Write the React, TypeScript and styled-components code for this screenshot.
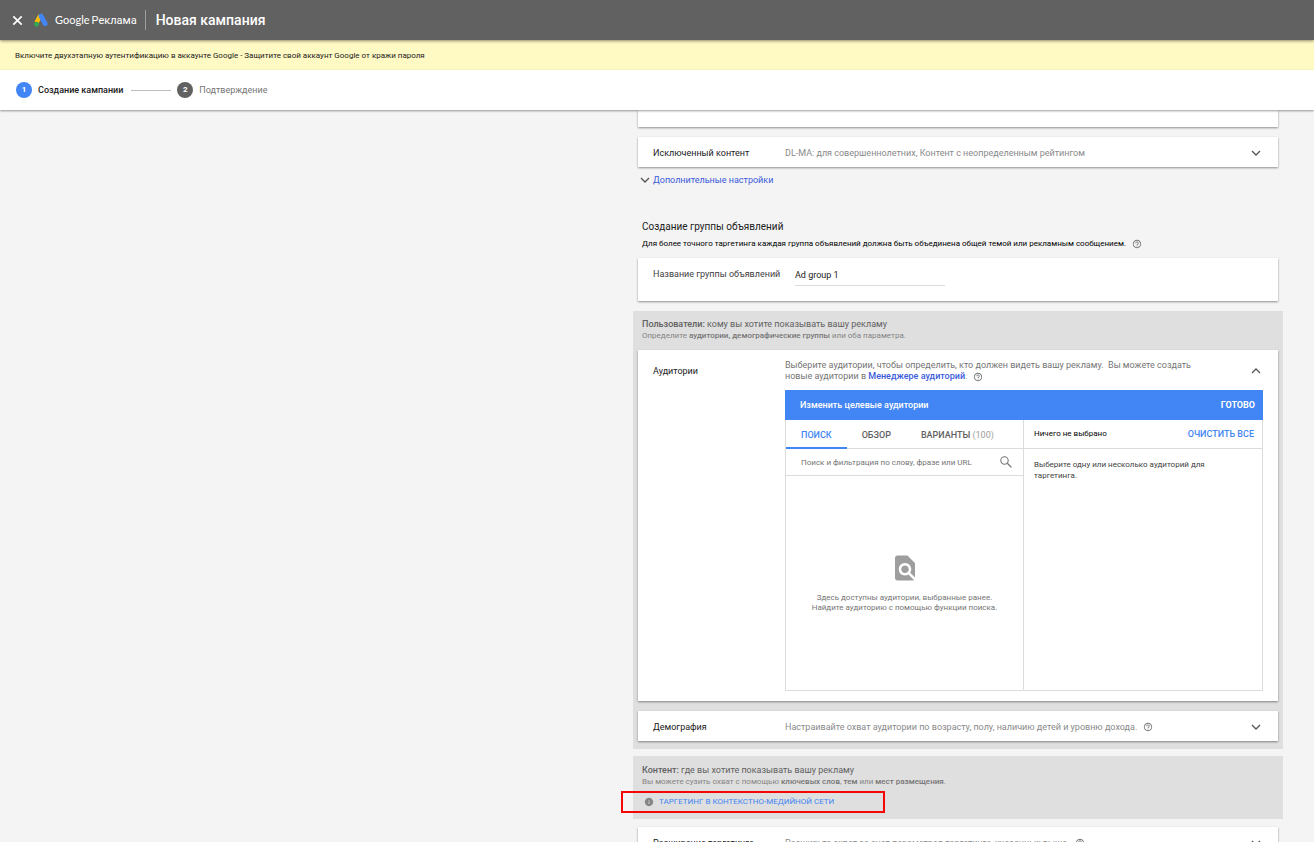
import React from "react";
import styled, { createGlobalStyle, css } from "styled-components";

const GlobalStyle = createGlobalStyle`
  *, *::before, *::after { box-sizing: border-box; }
  body {
    margin: 0;
    background: #f4f4f4;
    font-family: Roboto, "Liberation Sans", sans-serif;
    font-size: 9px;
    line-height: 12px;
    color: #212121;
  }
  button, input { font: inherit; color: inherit; border: 0; background: none; padding: 0; border-radius: 0; outline: none; }
  button { cursor: pointer; }
  a { text-decoration: none; }
  h1, h2, p { margin: 0; font-weight: 400; }
  svg { display: block; flex: none; }
`;

const Page = styled.div`
  display: flex;
  flex-direction: column;
  height: 100vh;
  overflow: hidden;
`;

const TopBar = styled.header`
  position: relative;
  z-index: 2;
  display: flex;
  align-items: center;
  flex: none;
  height: 40px;
  padding-left: 12px;
  background: #616161;
  color: #fff;
  box-shadow: 0 1px 3px rgba(0, 0, 0, 0.45);
`;

const CloseButton = styled.button`
  margin-right: 11px;
`;

const Brand = styled.div`
  display: flex;
  align-items: center;
  gap: 7px;
  height: 20px;
  padding-right: 8px;
  border-right: 1px solid #9e9e9e;
  font-size: 11px;
  line-height: 16px;
`;

const BrandName = styled.span`
  display: flex;
  align-items: baseline;
  gap: 2px;
`;

const GoogleWord = styled.span`
  font-family: Lato, Roboto, sans-serif;
`;

const PageTitle = styled.h1`
  padding-left: 10px;
  font-size: 14px;
  line-height: 20px;
  font-weight: 500;
`;

const Notice = styled.div`
  display: flex;
  align-items: center;
  flex: none;
  height: 30px;
  padding: 2px 0 0 15px;
  background: #fff9c4;
  font-size: 8px;
`;

const Steps = styled.ol`
  position: relative;
  z-index: 1;
  display: flex;
  align-items: center;
  flex: none;
  height: 40px;
  margin: 0;
  padding: 0 0 0 16px;
  list-style: none;
  background: #fff;
  box-shadow: 0 1px 2px rgba(0, 0, 0, 0.4);
`;

const Step = styled.li<{ $active?: boolean }>`
  display: flex;
  align-items: center;
  gap: 6px;
  font-weight: ${(p) => (p.$active ? 500 : 400)};
  color: ${(p) => (p.$active ? "#212121" : "#757575")};

  &:not(:first-child)::before {
    content: "";
    flex: none;
    width: 40px;
    height: 1px;
    margin-left: 8px;
    background: #bdbdbd;
  }
`;

const StepNumber = styled.span<{ $active?: boolean }>`
  display: grid;
  place-items: center;
  width: 16px;
  height: 16px;
  border-radius: 50%;
  background: ${(p) => (p.$active ? "#4285f4" : "#616161")};
  color: #fff;
  font-size: 8px;
  font-weight: 700;
`;

const Content = styled.main`
  flex: 1;
  min-height: 0;
  overflow: hidden;
  padding-right: 31px;
`;

const Column = styled.div`
  display: flex;
  flex-direction: column;
  max-width: 650px;
  margin-left: auto;
`;

const Inset = styled.div`
  display: flex;
  flex-direction: column;
  padding: 0 5px;
`;

const cardSurface = css`
  background: #fff;
  box-shadow: 0 1px 2px rgba(0, 0, 0, 0.42);
`;

const CardTail = styled.div`
  height: 17px;
  margin-bottom: 10px;
  ${cardSurface}
`;

const Card = styled.section`
  display: grid;
  grid-template-columns: 132px minmax(0, 1fr);
  padding: 0 15px;
  ${cardSurface}

  & + & { margin-top: 10px; }
`;

const CollapsedCard = styled(Card)`
  grid-template-columns: 132px minmax(0, 1fr) 14px;
  align-items: center;
  height: 30px;
  padding-top: 2px;
`;

const Summary = styled.p`
  display: flex;
  align-items: center;
  gap: 6px;
  color: #8a8a8a;
`;

const MoreSettings = styled.button`
  display: flex;
  align-items: center;
  gap: 1px;
  align-self: flex-start;
  margin-top: 6px;
  color: #3b5bdb;
`;

const GroupIntro = styled.header`
  display: flex;
  flex-direction: column;
  gap: 4px;
  margin: 33px 0 8px;
  padding-left: 4px;
`;

const GroupTitle = styled.h2`
  font-size: 10px;
  line-height: 14px;
`;

const GroupHint = styled.p`
  display: flex;
  align-items: center;
  gap: 6px;
  font-size: 8px;
  color: #000;
`;

const NameCard = styled(Card)`
  grid-template-columns: 132px 150px;
  align-items: start;
  column-gap: 10px;
  height: 43px;
  padding-top: 10px;
  color: #424242;
`;

const NameInput = styled.input`
  height: 18px;
  padding-bottom: 4px;
  border-bottom: 1px solid #dcdcdc;
  color: #212121;
`;

const Zone = styled.section`
  display: flex;
  flex-direction: column;
  margin-top: 7px;
  padding: 8px 5px;
  background: #dfdfdf;
`;

const UsersZone = styled(Zone)`
  margin-top: 10px;
`;

const ContentZone = styled(Zone)`
  margin-bottom: 8px;
  padding-top: 9px;
  padding-bottom: 11px;
`;

const ZoneTitle = styled.h2`
  padding-left: 4px;
  font-size: 9px;
  line-height: 11px;
  color: #616161;
  b { font-weight: 500; }
`;

const ZoneHint = styled.p`
  padding-left: 4px;
  margin-bottom: 9px;
  font-size: 8px;
  line-height: 11px;
  color: #858585;
  b { font-weight: 500; color: #757575; }
`;

const AudienceCard = styled(Card)`
  padding-top: 10px;
  padding-bottom: 10px;
`;

const AudienceLabel = styled.h2`
  padding-top: 5px;
  font-size: 9px;
`;

const AudienceHead = styled.div`
  display: flex;
  justify-content: space-between;
  align-items: flex-start;
  margin-bottom: 8px;
`;

const AudienceText = styled.p`
  max-width: 430px;
  line-height: 11px;
  color: #757575;
  a { color: #3b5bdb; font-weight: 500; }
  svg { display: inline-block; vertical-align: -3px; margin-left: 6px; }
`;

const ToggleButton = styled.button`
  width: 14px;
  height: 14px;
`;

const AudienceToggle = styled(ToggleButton)`
  margin-top: 4px;
`;

const Picker = styled.div`
  display: flex;
  flex-direction: column;
`;

const PickerBar = styled.div`
  display: flex;
  align-items: center;
  justify-content: space-between;
  height: 30px;
  padding: 0 8px 0 15px;
  background: #4285f4;
  color: #fff;
  font-weight: 500;
`;

const DoneButton = styled.button`
  font-weight: 700;
`;

const PickerBody = styled.div`
  display: grid;
  grid-template-columns: calc(50% - 1px) minmax(0, 1fr);
  height: 271px;
  border: 1px solid #dcdcdc;
  border-top: 0;
`;

const Pane = styled.div`
  display: flex;
  flex-direction: column;
  & + & { border-left: 1px solid #dcdcdc; }
`;

const PaneHead = styled.div`
  display: flex;
  align-items: stretch;
  height: 29px;
  border-bottom: 1px solid #dcdcdc;
`;

const SelectionHead = styled(PaneHead)`
  align-items: center;
  justify-content: space-between;
  padding: 0 8px 0 10px;
  font-size: 8px;
  color: #000;
`;

const ClearButton = styled.button`
  font-size: 9px;
  font-weight: 500;
  color: #4285f4;
`;

const Tab = styled.button<{ $active?: boolean }>`
  height: 29px;
  padding: 2px 15px 0;
  border-bottom: 2px solid ${(p) => (p.$active ? "#4285f4" : "transparent")};
  font-weight: 500;
  color: ${(p) => (p.$active ? "#4285f4" : "#616161")};
  white-space: nowrap;
  span { font-weight: 400; color: #9e9e9e; }
`;

const SearchRow = styled.label`
  display: flex;
  align-items: center;
  height: 27px;
  padding: 0 11px 0 15px;
  border-bottom: 1px solid #dcdcdc;
`;

const SearchInput = styled.input`
  flex: 1;
  min-width: 0;
  padding-top: 2px;
  font-size: 8px;
  &::placeholder { color: #757575; opacity: 1; }
`;

const EmptyState = styled.div`
  display: flex;
  flex: 1;
  flex-direction: column;
  align-items: center;
  justify-content: center;
  gap: 10px;
  font-size: 8px;
  line-height: 10px;
  text-align: center;
  color: #757575;
`;

const SelectionHint = styled.p`
  padding: 10px;
  max-width: 200px;
  font-size: 8px;
  line-height: 11px;
  color: #424242;
`;

const Callout = styled.div`
  position: relative;
  display: flex;
  align-self: flex-start;
  padding-left: 6px;

  &::after {
    content: "";
    position: absolute;
    top: -5px;
    left: -17px;
    width: 264px;
    height: 22px;
    border: 2px solid #f60606;
    pointer-events: none;
  }
`;

const CalloutLink = styled.a`
  display: flex;
  align-items: center;
  gap: 5px;
  font-size: 8px;
  color: #4285f4;
`;

const Chevron = ({ up }: { up?: boolean }) => (
  <svg width="14" height="14" viewBox="0 0 14 14" fill="none" stroke="#555" strokeWidth="1.3" aria-hidden="true">
    <path d={up ? "M3 9l4-4 4 4" : "M3 5l4 4 4-4"} />
  </svg>
);

const Help = () => (
  <svg width="10" height="10" viewBox="0 0 24 24" fill="#757575" role="img" aria-label="Справка">
    <path d="M11 18h2v-2h-2v2zm1-16C6.480 2 2 6.480 2 12s4.480 10 10 10 10-4.480 10-10S17.520 2 12 2zm0 18c-4.410 0-8-3.590-8-8s3.590-8 8-8 8 3.590 8 8-3.590 8-8 8zm0-14c-2.210 0-4 1.790-4 4h2c0-1.100.9-2 2-2s2 .9 2 2c0 2-3 1.750-3 5h2c0-2.250 3-2.500 3-5 0-2.210-1.790-4-4-4z" />
  </svg>
);

const AdsLogo = () => (
  <svg width="14" height="14" viewBox="0 0 28 28" aria-hidden="true">
    <path d="M12.500 5L5 19" stroke="#fbbc04" strokeWidth="9" />
    <path d="M14 6L22.500 21.500" stroke="#4285f4" strokeWidth="9.500" strokeLinecap="round" />
    <circle cx="5" cy="22.500" r="4.800" fill="#34a853" />
  </svg>
);

export default function App() {
  return (
    <>
      <GlobalStyle />
      <Page>
        <TopBar>
          <CloseButton aria-label="Закрыть">
            <svg width="11" height="11" viewBox="0 0 11 11" stroke="#fff" strokeWidth="1.700">
              <path d="M1.300 1.300l8.400 8.400M9.700 1.300l-8.400 8.400" />
            </svg>
          </CloseButton>
          <Brand>
            <AdsLogo />
            <BrandName>
              <GoogleWord>Google</GoogleWord>
              <span>Реклама</span>
            </BrandName>
          </Brand>
          <PageTitle>Новая кампания</PageTitle>
        </TopBar>
        <Notice>
          Включите двухэтапную аутентификацию в аккаунте Google - Защитите свой аккаунт Google от кражи пароля
        </Notice>
        <Steps>
          <Step $active>
            <StepNumber $active>1</StepNumber>
            Создание кампании
          </Step>
          <Step>
            <StepNumber>2</StepNumber>
            Подтверждение
          </Step>
        </Steps>

        <Content>
          <Column>
            <Inset>
              <CardTail />
              <CollapsedCard>
                <span>Исключенный контент</span>
                <Summary>DL-MA: для совершеннолетних, Контент с неопределенным рейтингом</Summary>
                <ToggleButton aria-label="Развернуть: Исключенный контент">
                  <Chevron />
                </ToggleButton>
              </CollapsedCard>
              <MoreSettings>
                <Chevron />
                Дополнительные настройки
              </MoreSettings>
              <GroupIntro>
                <GroupTitle>Создание группы объявлений</GroupTitle>
                <GroupHint>
                  Для более точного таргетинга каждая группа объявлений должна быть объединена общей темой или рекламным
                  сообщением.
                  <Help />
                </GroupHint>
              </GroupIntro>
              <NameCard>
                <label htmlFor="group-name">Название группы объявлений</label>
                <NameInput id="group-name" defaultValue="Ad group 1" />
              </NameCard>
            </Inset>

            <UsersZone>
              <ZoneTitle>
                <b>Пользователи:</b> кому вы хотите показывать вашу рекламу
              </ZoneTitle>
              <ZoneHint>
                Определите <b>аудитории, демографические группы</b> или оба параметра.
              </ZoneHint>
              <AudienceCard>
                <AudienceLabel>Аудитории</AudienceLabel>
                <div>
                  <AudienceHead>
                    <AudienceText>
                      Выберите аудитории, чтобы определить, кто должен видеть вашу рекламу.&nbsp; Вы можете создать
                      новые аудитории в <a href="#audiences">Менеджере аудиторий</a>.
                      <Help />
                    </AudienceText>
                    <AudienceToggle aria-label="Свернуть: Аудитории">
                      <Chevron up />
                    </AudienceToggle>
                  </AudienceHead>
                  <Picker>
                    <PickerBar>
                      <span>Изменить целевые аудитории</span>
                      <DoneButton>ГОТОВО</DoneButton>
                    </PickerBar>
                    <PickerBody>
                      <Pane>
                        <PaneHead role="tablist">
                          <Tab role="tab" aria-selected="true" $active>
                            ПОИСК
                          </Tab>
                          <Tab role="tab">ОБЗОР</Tab>
                          <Tab role="tab">
                            ВАРИАНТЫ <span>(100)</span>
                          </Tab>
                        </PaneHead>
                        <SearchRow>
                          <SearchInput
                            aria-label="Поиск аудиторий"
                            placeholder="Поиск и фильтрация по слову, фразе или URL"
                          />
                          <svg width="12" height="12" viewBox="0 0 12 12" fill="none" stroke="#757575" aria-hidden="true">
                            <circle cx="4.500" cy="4.500" r="3.700" strokeWidth="1.100" />
                            <path d="M7.300 7.300l4.100 4.100" strokeWidth="1.300" />
                          </svg>
                        </SearchRow>
                        <EmptyState>
                          <svg width="30" height="30" viewBox="0 0 24 24" fill="#9e9e9e" aria-hidden="true">
                            <path d="M20 19.590V8l-6-6H6c-1.100 0-1.990.9-1.990 2L4 20c0 1.100.89 2 1.990 2H18c.45 0 .85-.15 1.190-.4l-4.430-4.430c-.8.520-1.740.830-2.760.830-2.760 0-5-2.240-5-5s2.240-5 5-5 5 2.240 5 5c0 1.020-.31 1.960-.83 2.750L20 19.590zM9 13c0 1.660 1.340 3 3 3s3-1.340 3-3-1.340-3-3-3-3 1.340-3 3z" />
                          </svg>
                          <p>
                            Здесь доступны аудитории, выбранные ранее.
                            <br />
                            Найдите аудиторию с помощью функции поиска.
                          </p>
                        </EmptyState>
                      </Pane>
                      <Pane>
                        <SelectionHead>
                          <span>Ничего не выбрано</span>
                          <ClearButton>ОЧИСТИТЬ ВСЕ</ClearButton>
                        </SelectionHead>
                        <SelectionHint>Выберите одну или несколько аудиторий для таргетинга.</SelectionHint>
                      </Pane>
                    </PickerBody>
                  </Picker>
                </div>
              </AudienceCard>
              <CollapsedCard>
                <span>Демография</span>
                <Summary>
                  Настраивайте охват аудитории по возрасту, полу, наличию детей и уровню дохода.
                  <Help />
                </Summary>
                <ToggleButton aria-label="Развернуть: Демография">
                  <Chevron />
                </ToggleButton>
              </CollapsedCard>
            </UsersZone>

            <ContentZone>
              <ZoneTitle>
                <b>Контент:</b> где вы хотите показывать вашу рекламу
              </ZoneTitle>
              <ZoneHint>
                Вы можете сузить охват с помощью <b>ключевых слов</b>, <b>тем</b> или <b>мест размещения</b>.
              </ZoneHint>
              <Callout>
                <CalloutLink href="#targeting">
                  <svg width="10" height="10" viewBox="0 0 24 24" fill="#858585" aria-hidden="true">
                    <path d="M12 2C6.480 2 2 6.480 2 12s4.480 10 10 10 10-4.480 10-10S17.520 2 12 2zm1 15h-2v-6h2v6zm0-8h-2V7h2v2z" />
                  </svg>
                  ТАРГЕТИНГ В КОНТЕКСТНО-МЕДИЙНОЙ СЕТИ
                </CalloutLink>
              </Callout>
            </ContentZone>

            <Inset>
              <CollapsedCard>
                <span>Расширение таргетинга</span>
                <Summary>
                  Расширьте охват за счет параметров таргетинга, указанных выше.
                  <Help />
                </Summary>
                <ToggleButton aria-label="Развернуть: Расширение таргетинга">
                  <Chevron />
                </ToggleButton>
              </CollapsedCard>
            </Inset>
          </Column>
        </Content>
      </Page>
    </>
  );
}
